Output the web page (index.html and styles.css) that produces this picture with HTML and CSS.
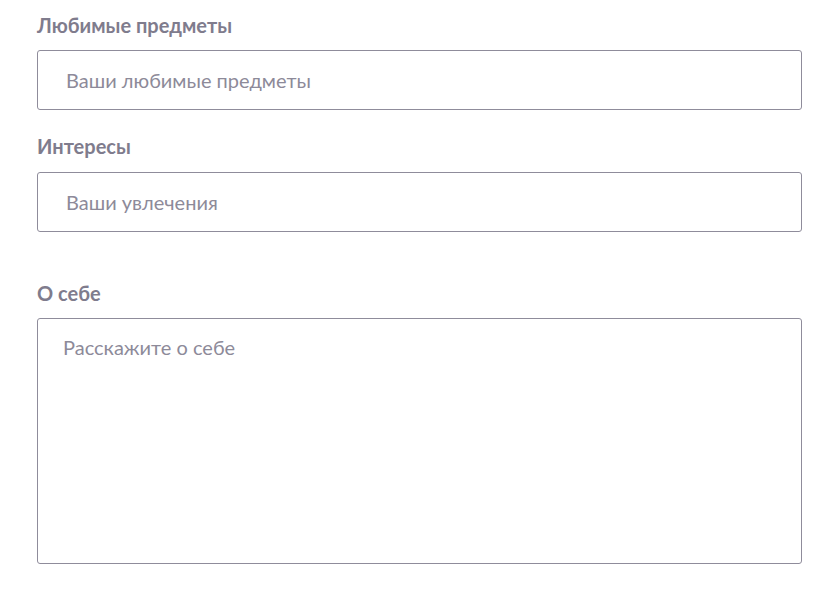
FILE: index.html
```html
<!DOCTYPE html>
<html lang="ru">
<head>
<meta charset="utf-8">
<link rel="stylesheet" href="styles.css">
</head>
<body>
<form class="form">
  <div class="field">
    <label class="label" for="subjects">Любимые предметы</label>
    <input class="input" id="subjects" type="text" placeholder="Ваши любимые предметы">
  </div>
  <div class="field field-hobbies">
    <label class="label" for="hobbies">Интересы</label>
    <input class="input" id="hobbies" type="text" placeholder="Ваши увлечения">
  </div>
  <div class="field field-about">
    <label class="label" for="about">О себе</label>
    <textarea class="textarea" id="about" placeholder="Расскажите о себе"></textarea>
  </div>
</form>
</body>
</html>
```
FILE: styles.css
```css
html, body {
  margin: 0;
  padding: 0;
  background: #ffffff;
}
body {
  font-family: Lato, "Noto Sans", sans-serif;
}
.form {
  display: flex;
  flex-direction: column;
  padding: 14px 0 0 37px;
  width: 765px;
}
.field {
  display: flex;
  flex-direction: column;
  gap: 14px;
  margin-bottom: 25px;
}
.field-hobbies {
  gap: 15px;
}
.field-about {
  margin-top: 25px;
  gap: 14px;
}
.label {
  font-size: 20px;
  font-weight: 700;
  line-height: 22px;
  color: #7f7c8d;
}
.input, .textarea {
  box-sizing: border-box;
  width: 765px;
  border: 1px solid #8f8c9b;
  border-radius: 3px;
  font-family: Lato, "Noto Sans", sans-serif;
  font-size: 20px;
  color: #4a4857;
  background: #fff;
  outline: none;
  margin: 0;
}
.input {
  height: 60px;
  padding: 0 28px;
}
.textarea {
  height: 246px;
  padding: 15px 25px;
  resize: none;
  line-height: 26px;
}
.input::placeholder, .textarea::placeholder {
  color: #8d8a99;
  opacity: 1;
}
```
